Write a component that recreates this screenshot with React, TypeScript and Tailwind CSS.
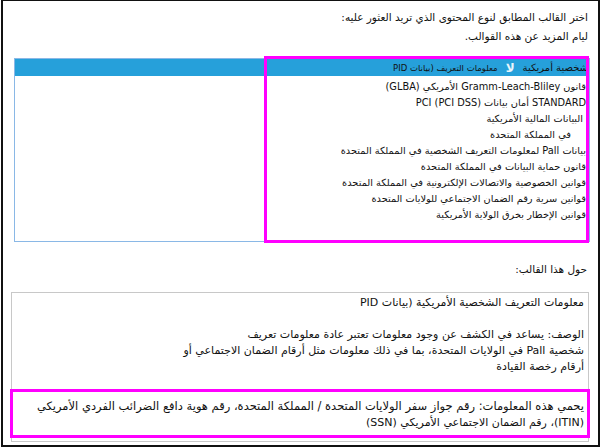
const templates = [
  { label: 'قانون Gramm-Leach-Bliley الأمريكي (GLBA)', pad: 'pr-[3px]' },
  { label: 'STANDARD أمان بيانات PCI (PCI DSS)', pad: 'pr-[3px]' },
  { label: 'البيانات المالية الأمريكية', pad: 'pr-[6px]' },
  { label: 'في المملكة المتحدة', pad: 'pr-[18px]' },
  { label: 'بيانات Pall لمعلومات التعريف الشخصية في المملكة المتحدة', pad: 'pr-[3px]' },
  { label: 'قانون حماية البيانات في المملكة المتحدة', pad: 'pr-[3px]' },
  { label: 'قوانين الخصوصية والاتصالات الإلكترونية في المملكة المتحدة', pad: 'pr-[3px]' },
  { label: 'قوانين سرية رقم الضمان الاجتماعي للولايات المتحدة', pad: 'pr-[3px]' },
  { label: 'قوانين الإخطار بخرق الولاية الأمريكية', pad: 'pr-[3px]' },
];

export default function App() {
  return (
    <div
      dir="rtl"
      className="relative w-[600px] h-[448px] bg-white text-[#111] leading-[16px] overflow-hidden"
      style={{ fontFamily: '"DejaVu Sans", Tahoma, sans-serif' }}
    >
      <div className="w-[599px] h-[447px] border-l-2 border-r-2 border-t border-b-2 border-[#111] pt-[7px] pr-[10px] pl-[9px]">
        <p className="text-[10.5px] leading-[18px]">اختر القالب المطابق لنوع المحتوى الذي تريد العثور عليه:</p>
        <p className="text-[10.5px] leading-[18px] mt-[1px]">ليام المزيد عن هذه القوالب.</p>

        {/* template list */}
        <div className="mt-[13px] mr-[-2px] ml-[2px] h-[184px] border border-[#8ab8e6] bg-white text-[9.8px]">
          <div className="h-[17px] bg-[#26a0da] flex items-center pr-[1px] gap-[8px]">
            <span className="text-[10px]">شخصية أمريكية</span>
            <span className="text-[#eaf5fb] font-bold text-[12px]">ﻻ</span>
            <span className="text-[8.5px]">معلومات التعريف (بيانات PID</span>
          </div>
          <ul className="pt-[3px]">
            {templates.map((t) => (
              <li key={t.label} className={`h-[16px] whitespace-nowrap ${t.pad}`}>
                {t.label}
              </li>
            ))}
          </ul>
        </div>

        <p className="mt-[19px] pr-[1px] text-[10.5px]">حول هذا القالب:</p>

        {/* template details */}
        <div className="mt-[15px] ml-[-1px] mr-[-1px] h-[150px] border border-[#c8c8c8] pr-[4px] pt-[2px] text-[11px]">
          <p className="whitespace-nowrap">معلومات التعريف الشخصية الأمريكية (بيانات PID</p>
          <p className="mt-[16px] whitespace-nowrap">الوصف: يساعد في الكشف عن وجود معلومات تعتبر عادة معلومات تعريف</p>
          <p className="whitespace-nowrap">شخصية Pall في الولايات المتحدة، بما في ذلك معلومات مثل أرقام الضمان الاجتماعي أو</p>
          <p className="whitespace-nowrap">أرقام رخصة القيادة</p>
          <p className="mt-[23px] whitespace-nowrap text-[11.5px]">يحمي هذه المعلومات: رقم جواز سفر الولايات المتحدة / المملكة المتحدة، رقم هوية دافع الضرائب الفردي الأمريكي</p>
          <p className="mt-[1px] whitespace-nowrap">(ITIN)، رقم الضمان الاجتماعي الأمريكي (SSN)</p>
        </div>
      </div>

      {/* highlight frames */}
      <div className="absolute left-[264px] top-[56px] w-[325px] h-[187px] border-[3px] border-[#ff00ff]" />
      <div className="absolute left-[10px] top-[389px] w-[580px] h-[49px] border-[3px] border-[#ff00ff]" />
    </div>
  );
}
